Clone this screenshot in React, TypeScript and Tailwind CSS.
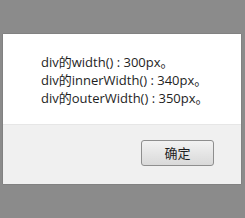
export default function App() {
  return (
    <div className="w-[245px] h-[218px] bg-[#8b8b8b] pt-[34px] pl-[3px] overflow-hidden" style={{ fontFamily: '"Open Sans", "Noto Sans CJK SC", sans-serif' }}>
      <div className="w-[238px] h-[150px] bg-white flex flex-col shadow-[0_0_1px_rgba(0,0,0,0.4)]">
        <div className="h-[91px] pl-[38px] pt-[19px] text-[13px] leading-[18px] text-[#1e1e1e] border-b border-[#e6e6e6]">
          <div>div的width() : 300px。</div>
          <div>div的innerWidth() : 340px。</div>
          <div>div的outerWidth() : 350px。</div>
        </div>
        <div className="flex-1 bg-[#f0f0f0] flex justify-end items-start pt-[15px] pr-[27px]">
          <button className="w-[73px] h-[26px] rounded-[3px] border border-[#8e8e8e] bg-gradient-to-b from-[#f2f2f2] to-[#d9d9d9] text-[13px] text-[#1e1e1e] flex items-center justify-center" style={{ fontFamily: '"Noto Sans CJK SC", sans-serif' }}>
            确定
          </button>
        </div>
      </div>
    </div>
  );
}
